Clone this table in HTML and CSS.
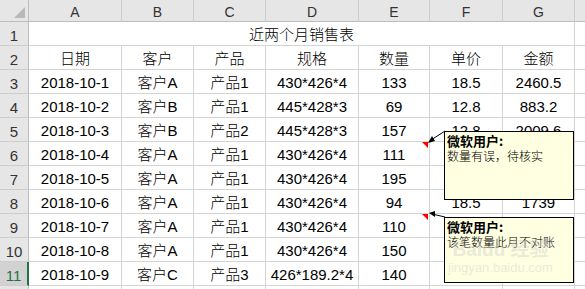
FILE: index.html
```html
<!DOCTYPE html>
<html lang="zh">
<head>
<meta charset="utf-8">
<title>近两个月销售表</title>
<link rel="stylesheet" href="styles.css">
</head>
<body>
<div class="sheet">
  <div class="grid">
    <div class="corner"><span class="corner-tri"></span></div>
    <div class="ch">A</div><div class="ch">B</div><div class="ch">C</div><div class="ch">D</div><div class="ch">E</div><div class="ch">F</div><div class="ch">G</div><div class="ch ch-last"></div>

    <div class="rh">1</div><div class="c merged">近两个月销售表</div><div class="c"></div>
    <div class="rh">2</div><div class="c">日期</div><div class="c">客户</div><div class="c">产品</div><div class="c">规格</div><div class="c">数量</div><div class="c">单价</div><div class="c">金额</div><div class="c"></div>
    <div class="rh">3</div><div class="c">2018-10-1</div><div class="c">客户A</div><div class="c">产品1</div><div class="c">430*426*4</div><div class="c">133</div><div class="c">18.5</div><div class="c">2460.5</div><div class="c"></div>
    <div class="rh">4</div><div class="c">2018-10-2</div><div class="c">客户B</div><div class="c">产品1</div><div class="c">445*428*3</div><div class="c">69</div><div class="c">12.8</div><div class="c">883.2</div><div class="c"></div>
    <div class="rh">5</div><div class="c">2018-10-3</div><div class="c">客户B</div><div class="c">产品2</div><div class="c">445*428*3</div><div class="c">157</div><div class="c">12.8</div><div class="c">2009.6</div><div class="c"></div>
    <div class="rh">6</div><div class="c">2018-10-4</div><div class="c">客户A</div><div class="c">产品1</div><div class="c">430*426*4</div><div class="c">111</div><div class="c"></div><div class="c"></div><div class="c"></div>
    <div class="rh">7</div><div class="c">2018-10-5</div><div class="c">客户A</div><div class="c">产品1</div><div class="c">430*426*4</div><div class="c">195</div><div class="c"></div><div class="c"></div><div class="c"></div>
    <div class="rh">8</div><div class="c">2018-10-6</div><div class="c">客户A</div><div class="c">产品1</div><div class="c">430*426*4</div><div class="c">94</div><div class="c">18.5</div><div class="c">1739</div><div class="c"></div>
    <div class="rh">9</div><div class="c">2018-10-7</div><div class="c">客户A</div><div class="c">产品1</div><div class="c">430*426*4</div><div class="c">110</div><div class="c"></div><div class="c"></div><div class="c"></div>
    <div class="rh">10</div><div class="c">2018-10-8</div><div class="c">客户A</div><div class="c">产品1</div><div class="c">430*426*4</div><div class="c">150</div><div class="c"></div><div class="c"></div><div class="c"></div>
    <div class="rh rh-sel">11</div><div class="c">2018-10-9</div><div class="c">客户C</div><div class="c">产品3</div><div class="c">426*189.2*4</div><div class="c">140</div><div class="c"></div><div class="c"></div><div class="c"></div>
    <div class="rh"></div><div class="c"></div><div class="c"></div><div class="c"></div><div class="c"></div><div class="c"></div><div class="c"></div><div class="c"></div><div class="c"></div>
  </div>

  <span class="marker marker-1"></span>
  <span class="marker marker-2"></span>

  <svg class="arrows" width="585" height="289" viewBox="0 0 585 289">
    <line x1="431" y1="140" x2="445" y2="131" stroke="#000" stroke-width="1"/>
    <polygon points="428,143 435,141 432,136" fill="#000"/>
    <line x1="432" y1="214" x2="445" y2="217" stroke="#000" stroke-width="1"/>
    <polygon points="429,213 435,211 435,217" fill="#000"/>
  </svg>

  <div class="note note-1">
    <div class="note-author">微软用户:</div>
    <div class="note-text">数量有误，待核实</div>
  </div>
  <div class="note note-2">
    <div class="note-author">微软用户:</div>
    <div class="note-text">该笔数量此月不对账</div>
  </div>
  <div class="watermark">
    <div class="wm-big">Baidu 经验</div>
    <div class="wm-small">jingyan.baidu.com</div>
  </div>
</div>
</body>
</html>
```

FILE: styles.css
```css
html, body {
  margin: 0;
  padding: 0;
  background: #ffffff;
  overflow: hidden;
}

.sheet {
  position: relative;
  width: 585px;
  height: 289px;
  overflow: hidden;
  font-family: "Liberation Sans", "Noto Sans CJK SC", sans-serif;
}

.grid {
  display: grid;
  grid-template-columns: 29px 93px 72px 72px 93px 71px 73px 72px 40px;
  grid-template-rows: 22px repeat(12, 24px);
}

.corner {
  position: relative;
  background: #e6e6e6;
  border-right: 1px solid #bdbdbd;
  border-bottom: 1px solid #bdbdbd;
  box-sizing: border-box;
}

.corner-tri {
  position: absolute;
  right: 3px;
  bottom: 3px;
  width: 0;
  height: 0;
  border-left: 11px solid transparent;
  border-bottom: 11px solid #b8b8b8;
}

.ch {
  background: #e6e6e6;
  border-right: 1px solid #cdcdcd;
  border-bottom: 1px solid #bdbdbd;
  box-sizing: border-box;
  text-align: center;
  font-size: 14px;
  line-height: 22px;
  color: #333;
  padding-top: 1px;
}

.ch-last {
  border-right: none;
}

.rh {
  background: #e6e6e6;
  border-right: 1px solid #bdbdbd;
  border-bottom: 1px solid #cdcdcd;
  box-sizing: border-box;
  text-align: center;
  font-size: 15px;
  line-height: 22px;
  padding-top: 3px;
  color: #333;
}

.rh-sel {
  background: #d2d2d2;
  color: #217346;
  border-right: 2px solid #217346;
}

.c {
  border-right: 1px solid #d4d4d4;
  border-bottom: 1px solid #d4d4d4;
  box-sizing: border-box;
  text-align: center;
  font-size: 15px;
  font-weight: 300;
  line-height: 22px;
  padding-top: 2px;
  color: #000;
  white-space: nowrap;
  overflow: hidden;
}

.merged {
  grid-column: span 7;
}

.marker {
  position: absolute;
  width: 0;
  height: 0;
  border-left: 6px solid transparent;
  border-top: 6px solid #ff0000;
}

.marker-1 {
  left: 422px;
  top: 142px;
}

.marker-2 {
  left: 422px;
  top: 214px;
}

.arrows {
  position: absolute;
  left: 0;
  top: 0;
}

.note {
  position: absolute;
  background: #ffffe1;
  border: 1px solid #000;
  box-sizing: border-box;
  padding: 1px 2px;
  font-family: "Noto Sans CJK SC", "Liberation Sans", sans-serif;
  font-size: 12px;
  line-height: 15px;
  color: #000;
  overflow: hidden;
  white-space: nowrap;
}

.note-1 {
  left: 444px;
  top: 131px;
  width: 130px;
  height: 69px;
}

.note-2 {
  left: 444px;
  top: 217px;
  width: 130px;
  height: 66px;
}

.note-author {
  font-size: 13px;
  font-weight: bold;
}

.note-text {
  font-weight: 300;
}

.watermark {
  position: absolute;
  left: 448px;
  top: 240px;
  width: 105px;
  text-align: center;
  color: rgba(200, 200, 200, 0.4);
  font-family: "Liberation Sans", "Noto Sans CJK SC", sans-serif;
  pointer-events: none;
}

.wm-big {
  font-size: 19px;
  font-weight: bold;
  line-height: 20px;
}

.wm-small {
  font-size: 13px;
  line-height: 14px;
  margin-top: 1px;
}
```
